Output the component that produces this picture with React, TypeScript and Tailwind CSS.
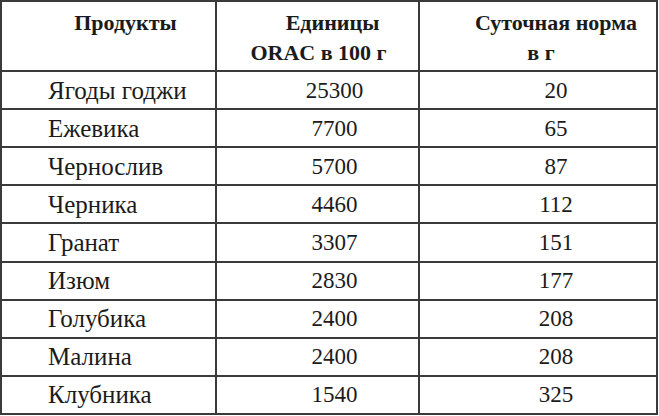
import React from "react";

const rows: [string, string, string][] = [
  ["Ягоды годжи", "25300", "20"],
  ["Ежевика", "7700", "65"],
  ["Чернослив", "5700", "87"],
  ["Черника", "4460", "112"],
  ["Гранат", "3307", "151"],
  ["Изюм", "2830", "177"],
  ["Голубика", "2400", "208"],
  ["Малина", "2400", "208"],
  ["Клубника", "1540", "325"],
];

const line = "border-[#3a3a3a]";

export default function App() {
  return (
    <div className="w-[659px] h-[416px] bg-white overflow-hidden text-[#1b1b1b] font-['Liberation_Serif',serif]">
      <div className={`w-[658px] h-[415px] border-2 ${line} flex flex-col`}>
        <div className={`h-[70px] flex border-b-2 ${line} font-bold text-[22px] leading-[30px]`}>
          <div className={`w-[215px] border-r-2 ${line} pt-[6px] pl-[34px] text-center`}>Продукты</div>
          <div className={`w-[203px] border-r-2 ${line} pt-[6px] text-center`}>
            <div className="pl-[30px]">Единицы</div>
            <div className="pl-[2px]">ORAC в 100 г</div>
          </div>
          <div className="flex-1 pt-[6px] text-center">
            <div className="pl-[36px]">Суточная норма</div>
            <div className="pl-[6px]">в г</div>
          </div>
        </div>
        {rows.map((r, i) => (
          <div key={i} className={`flex-1 flex items-center leading-none ${i < rows.length - 1 ? `border-b-2 ${line}` : ""}`}>
            <div className={`w-[215px] h-full flex items-center border-r-2 ${line} pl-[46px] text-[25px]`}>{r[0]}</div>
            <div className={`w-[203px] h-full flex items-center justify-center border-r-2 ${line} pl-[34px] text-[23px]`}>{r[1]}</div>
            <div className="flex-1 h-full flex items-center justify-center pl-[36px] text-[23px]">{r[2]}</div>
          </div>
        ))}
      </div>
    </div>
  );
}
